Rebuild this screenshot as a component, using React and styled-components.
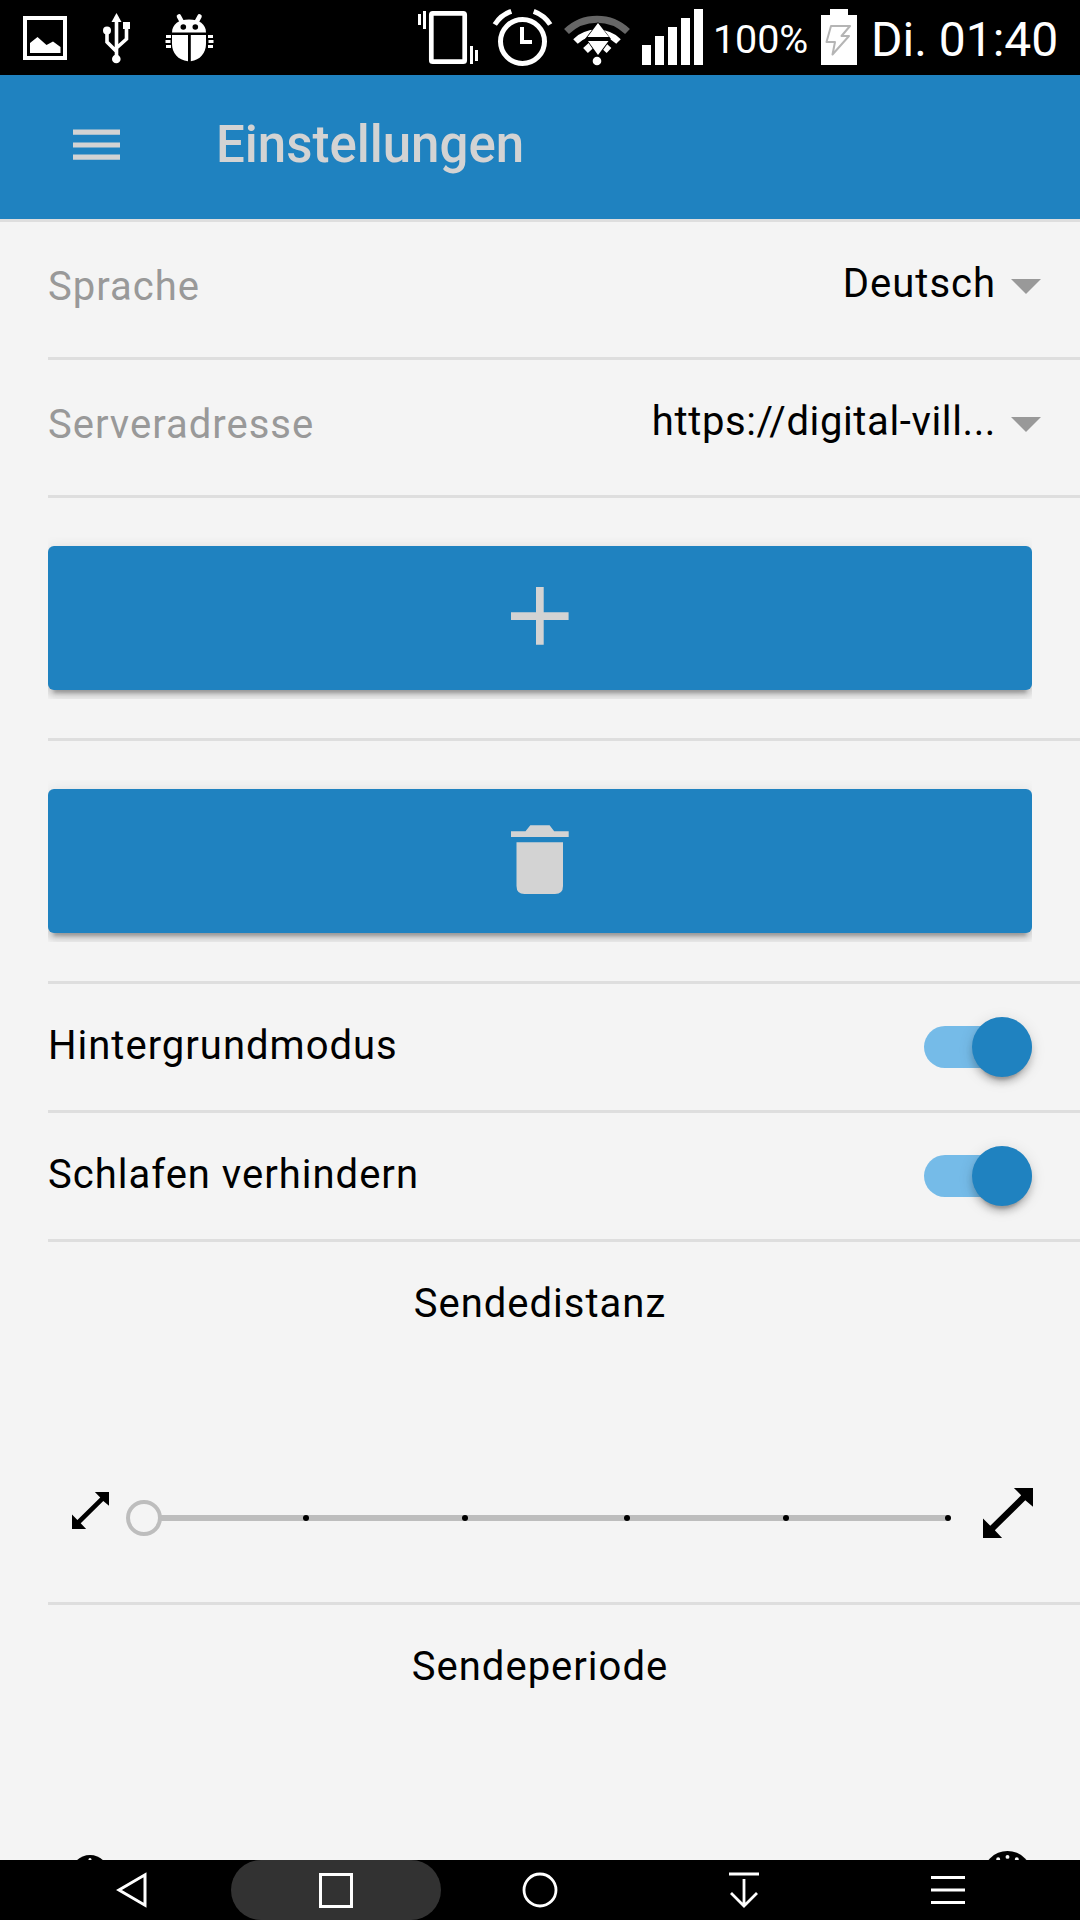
import React from "react";
import styled, { createGlobalStyle } from "styled-components";

const BLUE = "#1f82c0";
const LINE = "#dedede";
const ICON = "#d3d3d3";

const GlobalStyle = createGlobalStyle`
  * { box-sizing: border-box; }
  body { margin: 0; background: #f4f4f4; font-family: Roboto, "Noto Sans", sans-serif; }
  svg { display: block; flex: none; overflow: visible; }
`;

const Screen = styled.div`
  width: 1080px;
  height: 1920px;
  display: flex;
  flex-direction: column;
  overflow: hidden;
  background: #f4f4f4;
  color: #000;
`;

const StatusBar = styled.div`
  flex: none;
  height: 75px;
  padding: 0 21px 0 23px;
  display: flex;
  justify-content: space-between;
  background: #000;
  color: #fff;
`;

const StatusGroup = styled.div`
  display: flex;
  gap: ${(p) => p.$gap}px;
`;

const Battery = styled.span`
  width: 95px;
  margin-left: -3px;
  font-size: 39.5px;
  line-height: 79px;
  letter-spacing: -0.1px;
  white-space: nowrap;
`;

const Clock = styled.span`
  width: 188px;
  margin-left: 1px;
  font-size: 48px;
  line-height: 79px;
  white-space: nowrap;
`;

const Header = styled.header`
  flex: none;
  height: 147px;
  padding: 0 73px;
  display: flex;
  align-items: center;
  gap: 96px;
  background: ${BLUE};
  border-bottom: 3px solid ${LINE};
  color: ${ICON};
`;

const MenuIcon = styled.svg`
  margin-bottom: 4px;
`;

const Title = styled.h1`
  margin: 0 0 4px;
  font-size: 51px;
  font-weight: 500;
  line-height: 60px;
`;

const Content = styled.main`
  flex: 1;
  min-height: 0;
  overflow: hidden;
  padding-left: 48px;
`;

const Row = styled.div`
  height: ${(p) => p.$height}px;
  border-bottom: 3px solid ${LINE};
`;

const SelectRow = styled(Row)`
  display: flex;
  align-items: flex-start;
  justify-content: space-between;
  padding: 38px 39px 0 0;
`;

const ToggleRow = styled(Row)`
  display: flex;
  align-items: center;
  justify-content: space-between;
  padding-right: 48px;
`;

const ButtonRow = styled(Row)`
  padding: 48px 48px 0 0;
`;

const SliderRow = styled(Row)`
  padding-right: 48px;
`;

const Text = styled.span`
  font-size: 40px;
  line-height: 48px;
  letter-spacing: ${(p) => p.$tracking ?? 1}px;
  white-space: nowrap;
`;

const MutedText = styled(Text)`
  margin-top: 3px;
  color: #999;
`;

const ToggleText = styled(Text)`
  margin-bottom: 2px;
`;

const SliderTitle = styled(Text)`
  display: block;
  padding-top: 38px;
  text-align: center;
`;

const SelectValue = styled.div`
  display: flex;
  gap: 15px;
`;

const Caret = styled.i`
  margin-top: 19px;
  width: 0;
  height: 0;
  border: 15px solid transparent;
  border-top-color: #999;
  border-bottom: 0;
`;

const Button = styled.button`
  display: flex;
  align-items: center;
  justify-content: center;
  width: 100%;
  height: 144px;
  padding: 0;
  border: 0;
  border-radius: 6px;
  background: ${BLUE};
  color: ${ICON};
  box-shadow: 0 6px 6px rgba(0, 0, 0, 0.14), 0 9px 3px -6px rgba(0, 0, 0, 0.2), 0 3px 15px rgba(0, 0, 0, 0.12);
  clip-path: inset(-9px 0);
`;

const PlusIcon = styled.svg`
  margin-bottom: 4px;
`;

const TrashIcon = styled.svg`
  margin-bottom: 2px;
`;

const Track = styled.div`
  width: 108px;
  height: 42px;
  border-radius: 21px;
  background: #75bbe8;
  display: flex;
  align-items: center;
  justify-content: flex-end;
`;

const Knob = styled.div`
  flex: none;
  width: 60px;
  height: 60px;
  border-radius: 50%;
  background: ${BLUE};
  box-shadow: 0 6px 6px rgba(0, 0, 0, 0.16), 0 9px 3px -6px rgba(0, 0, 0, 0.2), 0 3px 15px rgba(0, 0, 0, 0.12);
`;

const Range = styled.div`
  display: flex;
  align-items: flex-start;
  padding: 160px 0 0 24px;
`;

const RangeTrack = styled.svg`
  margin: 12px 32px 0 17px;
`;

const Arrows = styled.svg`
  margin-top: ${(p) => p.$top}px;
`;

const ClockRange = styled.div`
  display: flex;
  justify-content: space-between;
  padding: 160px 0 0 23px;
`;

const Dial = styled.svg`
  margin-top: ${(p) => p.$top}px;
`;

const NavBar = styled.nav`
  flex: none;
  height: 60px;
  display: grid;
  grid-template-columns: repeat(5, 204px);
  justify-content: center;
  justify-items: center;
  background: #000;
`;

const NavButton = styled.div`
  width: 210px;
  height: 60px;
  border-radius: 30px;
  display: flex;
  align-items: center;
  justify-content: center;
  background: ${(p) => (p.$active ? "#323232" : "transparent")};
`;

const BackIcon = styled.svg`
  margin-right: 2px;
`;

const StatusIcon = ({ x, w, children }) => (
  <svg width={w} height="75" viewBox={`${x} 0 ${w} 75`} fill="#fff">
    {children}
  </svg>
);

const stroke = (width, color = "#fff") => ({ fill: "none", stroke: color, strokeWidth: width });

function Status() {
  return (
    <StatusBar>
      <StatusGroup $gap={35}>
        <StatusIcon x={23} w={45}>
          <rect x="25" y="18" width="40" height="40" {...stroke(4)} />
          <path d="M30 53V43L37.5 37L46.5 45L53 41.5L60.500 47V53Z" />
        </StatusIcon>
        <StatusIcon x={103} w={27}>
          <path d="M116.500 13L121.500 22H111.500Z" />
          <path d="M116.500 20V58M107 31V42L116.500 51.500M126.500 27V39L116.500 48" {...stroke(3.6)} />
          <circle cx="107" cy="30.500" r="4" />
          <circle cx="116.300" cy="59" r="4.300" />
          <rect x="123" y="22" width="7" height="7" />
        </StatusIcon>
        <StatusIcon x={165} w={48}>
          <path d="M172 32.500C172 24 179 19.500 189 19.500S206 24 206 32.500Z" />
          <path d="M179 16.500L182 22M199.500 16.500L196.500 22" {...stroke(4.6)} strokeLinecap="round" />
          <circle cx="183.300" cy="27" r="2.800" fill="#000" />
          <circle cx="195.300" cy="27" r="2.800" fill="#000" />
          <path d="M172 35H188V61.300C178 60 172 53 172 44ZM190.800 35H206V44C206 53 200 60 190.800 61.300Z" />
          <path d="M166 35h5v3h-5zM165.500 40h5v3h-5zM166 45h5v3h-5zM208 35h5v3h-5zM208.500 40h5v3h-5zM208 45h5v3h-5z" />
        </StatusIcon>
      </StatusGroup>
      <StatusGroup $gap={13}>
        <StatusIcon x={418} w={62}>
          <rect x="431.300" y="13.300" width="33.400" height="48.400" rx="1.500" {...stroke(4.700)} />
          <path d="M418 14h3v11h-3zM423 11h3v18h-3zM470 46h3v18h-3zM475 50h3v11h-3z" />
        </StatusIcon>
        <StatusIcon x={493} w={59}>
          <circle cx="522.500" cy="41.500" r="22" {...stroke(5)} />
          <path d="M520 27h4v13h8v4h-12z" />
          <path d="M494.800 24.500A33 33 0 0 1 511.300 11.300M533.700 11.300A33 33 0 0 1 550.200 24.500" {...stroke(5)} />
        </StatusIcon>
        <StatusIcon x={565} w={64}>
          <path d="M566.500 31.500A44 44 0 0 1 627.500 31.500" {...stroke(7, "#666")} />
          <path d="M575.500 41.500A31 31 0 0 1 618.500 41.500" {...stroke(6.500)} />
          <path d="M585.500 50.500L591 45.500M609 50.500L603.500 45.500" {...stroke(7)} />
          <path d="M598 22L611 39H585ZM586 39H611L598 57Z" fill="#000" />
          <path d="M598 23L609 37H587.500ZM588 41H608.500L598 55Z" />
          <circle cx="597" cy="61" r="4.300" />
        </StatusIcon>
        <StatusIcon x={642} w={61}>
          <path d="M642 45h9v20h-9zM655 36h9v29h-9zM668 27h9v38h-9zM681 18h9v47h-9zM694 9h9v56h-9z" />
        </StatusIcon>
        <Battery>100%</Battery>
        <StatusIcon x={821} w={36}>
          <path d="M821 15h9V9h18v6h9v50h-36z" />
          <path d="M831 26H850L841.500 36H849L832.500 54.500L835 42H826.500Z" {...stroke(2, "#b5b5b5")} strokeLinejoin="round" />
        </StatusIcon>
        <Clock>Di. 01:40</Clock>
      </StatusGroup>
    </StatusBar>
  );
}

const Resize = ({ size, top }) => (
  <Arrows $top={top} width={size} height={size} viewBox="0 0 110 110">
    <path d="M68 0L84 16L16 83L0 67V110H42L26 93L93 27L110 41V0Z" />
  </Arrows>
);

const Select = ({ label, value, tracking }) => (
  <SelectRow $height={138}>
    <MutedText>{label}</MutedText>
    <SelectValue>
      <Text $tracking={tracking}>{value}</Text>
      <Caret />
    </SelectValue>
  </SelectRow>
);

const Toggle = ({ label }) => (
  <ToggleRow $height={129}>
    <ToggleText>{label}</ToggleText>
    <Track>
      <Knob />
    </Track>
  </ToggleRow>
);

const DialIcon = ({ size, top }) => (
  <Dial $top={top} width={size} height={size} viewBox="0 0 50 50">
    <circle cx="25" cy="25" r="25" />
    <g fill="#f4f4f4">
      <circle cx="25" cy="6" r="2" />
      <circle cx="15.500" cy="8.500" r="2" />
      <circle cx="34.500" cy="8.500" r="2" />
    </g>
  </Dial>
);

export default function App() {
  return (
    <Screen>
      <GlobalStyle />
      <Status />
      <Header>
        <MenuIcon width="47" height="32" viewBox="0 0 47 32" fill="currentColor">
          <path d="M0 .5h47v5.200H0zM0 13.500h47v5H0zM0 25.500h47v5.200H0z" />
        </MenuIcon>
        <Title>Einstellungen</Title>
      </Header>
      <Content>
        <Select label="Sprache" value="Deutsch" />
        <Select label="Serveradresse" value="https://digital-vill..." tracking={0.62} />
        <ButtonRow $height={243}>
          <Button>
            <PlusIcon width="58" height="58" viewBox="0 0 58 58" fill="currentColor">
              <path d="M25 0h7.700v25.200H57.600V33H32.700v24.800H25V33H0v-7.800H25z" />
            </PlusIcon>
          </Button>
        </ButtonRow>
        <ButtonRow $height={243}>
          <Button>
            <TrashIcon width="58" height="70" viewBox="0 0 58 70" fill="currentColor">
              <path d="M0 6.200H14.500L19.300 .2H38.600L43.200 6.200H57.700V12H0zM5.500 17.200H52V61Q52 69 44 69H13.500Q5.500 69 5.500 61z" />
            </TrashIcon>
          </Button>
        </ButtonRow>
        <Toggle label="Hintergrundmodus" />
        <Toggle label="Schlafen verhindern" />
        <SliderRow $height={363}>
          <SliderTitle>Sendedistanz</SliderTitle>
          <Range>
            <Resize size={37} top={4} />
            <RangeTrack width="825" height="36" viewBox="0 0 825 36">
              <path d="M18 18H822" {...stroke(6, "#bdbdbd")} />
              {[180, 339, 501, 660, 822].map((x) => (
                <circle key={x} cx={x} cy="18" r="3" />
              ))}
              <circle cx="18" cy="18" r="16" fill="#f4f4f4" stroke="#bdbdbd" strokeWidth="4" />
            </RangeTrack>
            <Resize size={50} top={0} />
          </Range>
        </SliderRow>
        <SliderRow $height={363}>
          <SliderTitle>Sendeperiode</SliderTitle>
          <ClockRange>
            <DialIcon size={38} top={4} />
            <DialIcon size={49} top={0} />
          </ClockRange>
        </SliderRow>
      </Content>
      <NavBar>
        <NavButton>
          <BackIcon width="34" height="36" viewBox="0 0 34 36">
            <path d="M31 2.800V33.200L5 18Z" {...stroke(3)} />
          </BackIcon>
        </NavButton>
        <NavButton $active>
          <svg width="34" height="35" viewBox="0 0 34 35">
            <rect x="1.500" y="1.500" width="31" height="32" {...stroke(3)} />
          </svg>
        </NavButton>
        <NavButton>
          <svg width="36" height="36" viewBox="0 0 36 36">
            <circle cx="18" cy="18" r="16" {...stroke(2.800)} />
          </svg>
        </NavButton>
        <NavButton>
          <svg width="30" height="36" viewBox="0 0 30 36">
            <path d="M0 2H30M15 7V33.500M2 21L15 34L28 21" {...stroke(2.800)} />
          </svg>
        </NavButton>
        <NavButton>
          <svg width="34" height="30" viewBox="0 0 34 30">
            <path d="M0 2.500H34M0 15H34M0 27.500H34" {...stroke(2.800)} />
          </svg>
        </NavButton>
      </NavBar>
    </Screen>
  );
}
